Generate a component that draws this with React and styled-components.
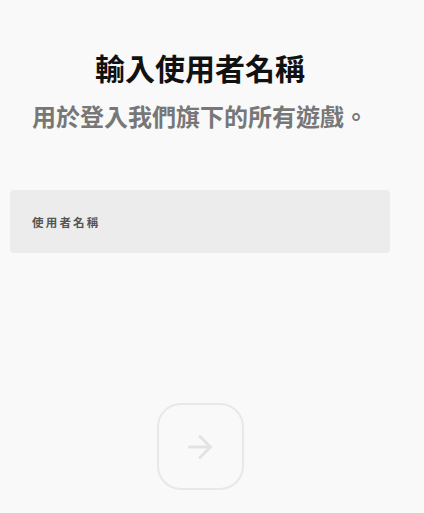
import React, { useState } from 'react'
import styled, { createGlobalStyle } from 'styled-components'

const GlobalStyle = createGlobalStyle`
  html, body {
    margin: 0;
    padding: 0;
    background: #f9f9f9;
    font-family: 'Noto Sans CJK TC', 'Noto Sans', sans-serif;
  }
`

const Page = styled.div`
  width: 380px;
  margin-left: 10px;
  min-height: 513px;
  display: flex;
  flex-direction: column;
  align-items: center;
`

const Title = styled.h1`
  margin: 47px 0 0;
  font-size: 30px;
  line-height: 40px;
  font-weight: 700;
  color: #111;
`

const Subtitle = styled.p`
  margin: 13px 0 0;
  font-size: 24px;
  line-height: 32px;
  font-weight: 700;
  color: #777;
`

const Field = styled.label`
  box-sizing: border-box;
  align-self: stretch;
  margin-top: 58px;
  height: 63px;
  padding: 0 22px;
  display: flex;
  align-items: center;
  background: #ececec;
  border-radius: 4px;
  cursor: text;
`

const FieldLabel = styled.span`
  font-size: 11.5px;
  font-weight: 700;
  letter-spacing: 2.2px;
  color: #555;
`

const NextButton = styled.button`
  box-sizing: border-box;
  margin-top: 150px;
  width: 87px;
  height: 87px;
  border: 2px solid #e8e8e8;
  border-radius: 24px;
  background: transparent;
  display: flex;
  align-items: center;
  justify-content: center;
  padding: 0;
  cursor: ${({ disabled }) => (disabled ? 'default' : 'pointer')};
`

const Arrow = () => (
  <svg width="36" height="36" viewBox="0 0 24 24" fill="none" stroke="#e3e3e3" strokeWidth="2" strokeLinecap="round" strokeLinejoin="round">
    <path d="M5 12h14" />
    <path d="M12 5l7 7-7 7" />
  </svg>
)

const App = () => {
  const [name] = useState('')

  return (
    <>
      <GlobalStyle />
      <Page>
        <Title>輸入使用者名稱</Title>
        <Subtitle>用於登入我們旗下的所有遊戲。</Subtitle>
        <Field>
          <FieldLabel>使用者名稱</FieldLabel>
        </Field>
        <NextButton disabled={!name}>
          <Arrow />
        </NextButton>
      </Page>
    </>
  )
}

export default App
